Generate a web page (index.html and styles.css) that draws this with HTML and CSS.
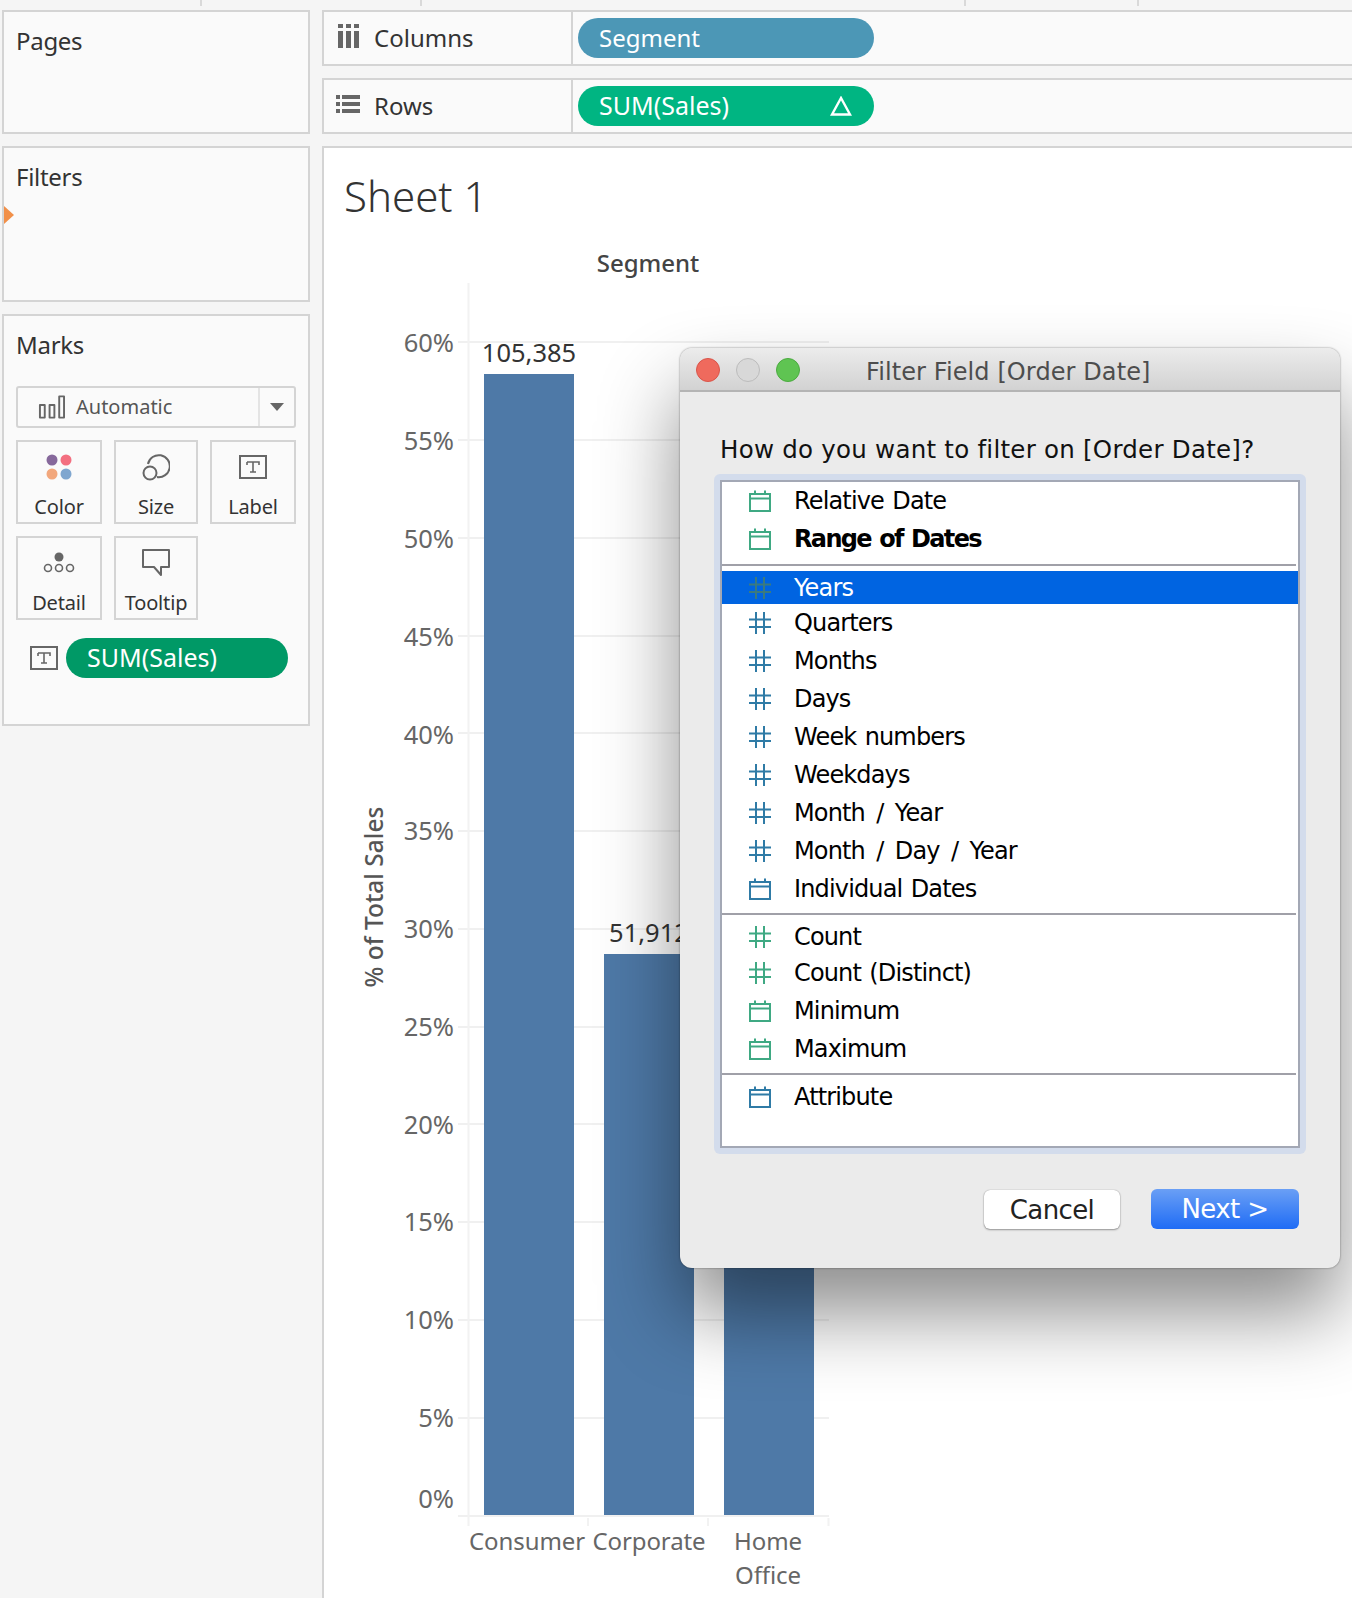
FILE: index.html
```html
<!DOCTYPE html>
<html lang="en">
<head>
<meta charset="utf-8">
<title>Filter Field [Order Date]</title>
<link rel="stylesheet" href="styles.css">
</head>
<body>
<svg class="defs" width="0" height="0" aria-hidden="true">
  <symbol id="cal" viewBox="0 0 22 22"><path d="M1 4h20v17H1zM1 8.500h20M6 0.500v4M16 0.500v4" fill="none" stroke="currentColor" stroke-width="2"/></symbol>
  <symbol id="hash" viewBox="0 0 22 22"><path d="M7 0v22M15 0v22M0 7.500h22M0 15h22" fill="none" stroke="currentColor" stroke-width="2"/></symbol>
  <symbol id="t" viewBox="0 0 28 24"><rect x="1" y="1" width="26" height="22" fill="none" stroke="currentColor" stroke-width="2"/><path d="M8 7h12v3M14 7v10M11 17h6M8 10V7" fill="none" stroke="currentColor" stroke-width="1.600"/></symbol>
</svg>
<div class="ticks"><i class="tick t1"></i><i class="tick t2"></i><i class="tick t3"></i><i class="tick t4"></i></div>
<main class="workspace">
  <aside class="side">
    <section class="panel pages"><h2 class="panel-title">Pages</h2></section>
    <section class="panel filters"><h2 class="panel-title">Filters</h2><span class="drop-arrow"></span></section>
    <section class="panel marks">
      <h2 class="panel-title">Marks</h2>
      <div class="select">
        <svg class="select-icon" viewBox="0 0 28 24"><path d="M2 10h5v13H2zM12 10h5v13h-5zM22 1h5v22h-5z" fill="none" stroke="#666" stroke-width="2" stroke-linejoin="round"/></svg>
        <span class="select-text">Automatic</span>
        <span class="select-btn"><span class="caret"></span></span>
      </div>
      <div class="cards">
        <div class="card">
          <svg class="card-icon" viewBox="0 0 28 28"><circle cx="7" cy="7" r="5.500" fill="#86689b"/><circle cx="21" cy="7" r="5.500" fill="#f36f80"/><circle cx="7" cy="21" r="5.500" fill="#f2a77c"/><circle cx="21" cy="21" r="5.500" fill="#7fa6cf"/></svg>
          <span>Color</span>
        </div>
        <div class="card">
          <svg class="card-icon" viewBox="0 0 28 28"><path d="M6 11A11 11 0 1 1 15 24" fill="none" stroke="#666" stroke-width="2"/><circle cx="8" cy="20" r="6.500" fill="none" stroke="#666" stroke-width="2"/></svg>
          <span>Size</span>
        </div>
        <div class="card">
          <svg class="card-icon" viewBox="0 0 28 24"><use href="#t" class="ic-gray"/></svg>
          <span>Label</span>
        </div>
        <div class="card">
          <svg class="card-icon wide" viewBox="0 0 32 28"><circle cx="16" cy="8" r="4.500" fill="#666"/><circle cx="5" cy="19" r="3.500" fill="none" stroke="#666" stroke-width="1.600"/><circle cx="16" cy="19" r="3.500" fill="none" stroke="#666" stroke-width="1.600"/><circle cx="27" cy="19" r="3.500" fill="none" stroke="#666" stroke-width="1.600"/></svg>
          <span>Detail</span>
        </div>
        <div class="card">
          <svg class="card-icon" viewBox="0 0 28 28"><path d="M1 1h26v17h-8v8l-7-8H1z" fill="none" stroke="#666" stroke-width="2" stroke-linejoin="round"/></svg>
          <span>Tooltip</span>
        </div>
      </div>
      <div class="mark-field">
        <svg class="mark-t" viewBox="0 0 28 24"><use href="#t" class="ic-gray"/></svg>
        <span class="pill pill-mark">SUM(Sales)</span>
      </div>
    </section>
  </aside>
  <div class="main">
    <section class="panel shelf">
      <div class="shelf-label">
        <svg class="shelf-icon" viewBox="0 0 24 24"><path d="M2 0h5v4H2zM10 0h5v4h-5zM18 0h5v4h-5zM2 7h5v17H2zM10 7h5v17h-5zM18 7h5v17h-5z" fill="#666"/></svg>
        <span>Columns</span>
      </div>
      <div class="shelf-drop"><span class="pill pill-dim">Segment</span></div>
    </section>
    <section class="panel shelf">
      <div class="shelf-label">
        <svg class="shelf-icon" viewBox="0 0 24 24"><path d="M0 3h4v4H0zM6 3h18v4H6zM0 10h4v4H0zM6 10h18v4H6zM0 17h4v4H0zM6 17h18v4H6z" fill="#666"/></svg>
        <span>Rows</span>
      </div>
      <div class="shelf-drop">
        <span class="pill pill-meas">SUM(Sales)
          <svg class="delta" viewBox="0 0 22 20"><path d="M11 2L2 18.500h18z" fill="none" stroke="#fff" stroke-width="2.400"/></svg>
        </span>
      </div>
    </section>
    <section class="panel view">
      <h1 class="sheet-title">Sheet 1</h1>
      <svg class="chart" viewBox="324 240 1028 1358">
        <g class="grid">
          <path d="M458 342h371M458 440h371M458 538h371M458 636h371M458 733h371M458 831h371M458 929h371M458 1027h371M458 1124h371M458 1222h371M458 1320h371M458 1418h371M458 1516h371"/>
        </g>
        <path class="axis" d="M468.500 283V1526M588 1518v8M708 1518v8M828.500 1518v8"/>
        <rect class="bar" x="484" y="374" width="90" height="1141"/>
        <rect class="bar" x="604" y="954" width="90" height="561"/>
        <rect class="bar" x="724" y="1200" width="90" height="315"/>
        <g class="ylabels">
          <text x="454" y="352">60%</text><text x="454" y="450">55%</text><text x="454" y="548">50%</text><text x="454" y="646">45%</text><text x="454" y="744">40%</text><text x="454" y="840">35%</text><text x="454" y="938">30%</text><text x="454" y="1036">25%</text><text x="454" y="1134">20%</text><text x="454" y="1231">15%</text><text x="454" y="1329">10%</text><text x="454" y="1427">5%</text><text x="454" y="1508">0%</text>
        </g>
        <g class="xlabels">
          <text x="527" y="1550">Consumer</text><text x="649" y="1550">Corporate</text><text x="768" y="1550">Home</text><text x="768" y="1584">Office</text>
        </g>
        <g class="values"><text x="529" y="362">105,385</text><text x="649" y="942">51,912</text></g>
        <text class="header" x="648" y="272">Segment</text>
        <text class="ytitle" transform="translate(383 897) rotate(-90)">% of Total Sales</text>
      </svg>
    </section>
  </div>
</main>
<div class="dialog">
  <header class="titlebar">
    <span class="light red"></span><span class="light gray"></span><span class="light green"></span>
    <span class="dialog-title">Filter Field [Order Date]</span>
  </header>
  <div class="dialog-body">
    <p class="question">How do you want to filter on [Order Date]?</p>
    <div class="listring">
      <div class="list">
        <div class="group">
          <div class="row"><svg class="ic ic-green"><use href="#cal"/></svg>Relative Date</div>
          <div class="row strong"><svg class="ic ic-green"><use href="#cal"/></svg>Range of Dates</div>
        </div>
        <div class="group">
          <div class="row selected"><svg class="ic ic-dim"><use href="#hash"/></svg>Years</div>
          <div class="row"><svg class="ic ic-blue"><use href="#hash"/></svg>Quarters</div>
          <div class="row"><svg class="ic ic-blue"><use href="#hash"/></svg>Months</div>
          <div class="row"><svg class="ic ic-blue"><use href="#hash"/></svg>Days</div>
          <div class="row"><svg class="ic ic-blue"><use href="#hash"/></svg>Week numbers</div>
          <div class="row"><svg class="ic ic-blue"><use href="#hash"/></svg>Weekdays</div>
          <div class="row"><svg class="ic ic-blue"><use href="#hash"/></svg><span>Month <span class="slash">/</span> Year</span></div>
          <div class="row"><svg class="ic ic-blue"><use href="#hash"/></svg><span>Month <span class="slash">/</span> Day <span class="slash">/</span> Year</span></div>
          <div class="row"><svg class="ic ic-blue"><use href="#cal"/></svg>Individual Dates</div>
        </div>
        <div class="group">
          <div class="row tight"><svg class="ic ic-green"><use href="#hash"/></svg>Count</div>
          <div class="row tight"><svg class="ic ic-green"><use href="#hash"/></svg>Count (Distinct)</div>
          <div class="row"><svg class="ic ic-green"><use href="#cal"/></svg>Minimum</div>
          <div class="row"><svg class="ic ic-green"><use href="#cal"/></svg>Maximum</div>
        </div>
        <div class="group last">
          <div class="row"><svg class="ic ic-blue"><use href="#cal"/></svg>Attribute</div>
        </div>
      </div>
    </div>
    <div class="actions">
      <button class="btn btn-cancel" type="button">Cancel</button>
      <button class="btn btn-next" type="button">Next &gt;</button>
    </div>
  </div>
</div>
</body>
</html>
```
FILE: styles.css
```css
* { box-sizing: border-box; }
html, body { margin: 0; height: 1598px; overflow: hidden; }
body { background: #f5f5f5; font-family: "Noto Sans", "Liberation Sans", sans-serif; color: #333; position: relative; }
.defs { position: absolute; }

.ticks { height: 0; }
.tick { position: absolute; top: 0; width: 2px; height: 6px; background: #d9d9d9; }
.t1 { left: 200px; } .t2 { left: 420px; } .t3 { left: 964px; } .t4 { left: 1137px; }

.workspace { display: grid; grid-template-columns: 308px 1fr; column-gap: 12px; padding: 10px 0 0 2px; height: 1598px; }
.side, .main { display: flex; flex-direction: column; gap: 12px; min-width: 0; }
.panel { background: #fafafa; border: 2px solid #d4d4d4; position: relative; }
.panel-title { margin: 0; padding: 13px 0 0 12px; font-size: 24px; line-height: 32px; font-weight: 400; color: #333; letter-spacing: -0.300px; }
.pages { height: 124px; }
.filters { height: 156px; }
.marks { height: 412px; }
.drop-arrow { position: absolute; left: 0; top: 58px; width: 0; height: 0; border-left: 10px solid #f19049; border-top: 9px solid transparent; border-bottom: 9px solid transparent; }

.select { display: flex; align-items: center; height: 42px; margin: 25px 12px 0 12px; border: 2px solid #d4d4d4; border-radius: 3px; padding-left: 20px; }
.select-icon { width: 27px; height: 24px; flex: none; }
.select-text { flex: 1; margin-left: 11px; font-size: 20px; color: #555; position: relative; top: -1px; }
.select-btn { width: 36px; height: 38px; border-left: 2px solid #e4e4e4; display: flex; align-items: center; justify-content: center; }
.caret { width: 0; height: 0; border-top: 8px solid #666; border-left: 7px solid transparent; border-right: 7px solid transparent; }

.cards { display: grid; grid-template-columns: 86px 84px 86px; grid-auto-rows: 84px; gap: 12px; margin: 12px 12px 0 12px; }
.card { border: 2px solid #d4d4d4; display: flex; flex-direction: column; align-items: center; padding-top: 11px; font-size: 20px; line-height: 28px; letter-spacing: -0.150px; color: #333; }
.card-icon { width: 28px; height: 28px; flex: none; margin-bottom: 12px; }
.card-icon.wide { width: 32px; }
.ic-gray { color: #666; }

.mark-field { display: flex; align-items: center; margin: 18px 0 0 26px; gap: 8px; }
.mark-t { width: 28px; height: 24px; color: #666; flex: none; }
.pill { display: flex; align-items: center; height: 40px; border-radius: 20px; padding: 0 0 3px 21px; font-size: 25px; color: #fff; }
.pill-mark { width: 222px; background: #009966; }
.pill-dim { width: 296px; background: #4c97b6; font-size: 24px; padding-bottom: 2px; }
.pill-meas { width: 296px; background: #00b582; justify-content: space-between; padding-right: 22px; }
.delta { width: 22px; height: 20px; position: relative; top: 1px; }

.main { overflow: visible; }
.shelf { height: 56px; border-right: 0; display: flex; }
.shelf-label { width: 249px; border-right: 2px solid #d4d4d4; display: flex; align-items: center; padding: 0 0 2px 12px; font-size: 24px; color: #333; }
.shelf-icon { width: 24px; height: 24px; margin-right: 14px; flex: none; position: relative; top: -1px; }
.shelf-drop { flex: 1; padding: 6px 0 0 5px; }

.view { flex: 1; background: #fff; border-right: 0; border-bottom: 0; min-height: 0; }
.sheet-title { margin: 0; height: 92px; padding: 24px 0 0 20px; font-size: 42px; line-height: 48px; font-weight: 300; color: #333; }
.chart { display: block; width: 1028px; height: 1358px; }
.grid path { stroke: #f0f0f0; stroke-width: 2; fill: none; }
.axis { stroke: #f2f2f2; stroke-width: 2; fill: none; }
.bar { fill: #4e79a7; }
.ylabels text { font-size: 25.500px; fill: #666; text-anchor: end; }
.xlabels text { font-size: 24px; letter-spacing: -0.100px; fill: #666; text-anchor: middle; }
.values text { font-size: 25.500px; fill: #333; text-anchor: middle; }
.header { font-size: 24px; font-weight: 500; fill: #444; text-anchor: middle; }
.ytitle { font-size: 24.500px; font-weight: 500; fill: #555; text-anchor: middle; }

.dialog { position: absolute; left: 680px; top: 348px; width: 660px; height: 920px; background: #ebebeb; border-radius: 12px; box-shadow: 0 0 2px rgba(0,0,0,.5), 0 45px 80px rgba(0,0,0,.45); font-family: "DejaVu Sans", "Liberation Sans", sans-serif; color: #000; display: flex; flex-direction: column; }
.titlebar { height: 44px; flex: none; border-bottom: 2px solid #b4b4b4; border-radius: 12px 12px 0 0; background: linear-gradient(#ececec, #d2d2d2); display: flex; align-items: center; padding: 1px 0 0 16px; position: relative; }
.light { width: 24px; height: 24px; border-radius: 50%; margin-right: 16px; flex: none; }
.red { background: #ef6a5d; border: 1px solid #d9554a; }
.gray { background: #d8d8d8; border: 1px solid #bcbcbc; }
.green { background: #5fc452; border: 1px solid #4bab40; }
.dialog-title { position: absolute; left: 186px; top: 10px; font-size: 24px; color: #4d4d4d; white-space: nowrap; letter-spacing: 0.100px; }

.dialog-body { flex: 1; padding: 40px 40px 0 34px; display: flex; flex-direction: column; }
.question { margin: 0 0 6px 6px; font-size: 24.500px; line-height: 36px; letter-spacing: 0.250px; white-space: nowrap; height: 36px; color: #111; }
.listring { height: 680px; padding: 6px; background: #d3dcec; border-radius: 6px; width: 592px; flex: none; }
.list { height: 100%; background: #fff; border: 2px solid #a3a8b5; }
.group { border-top: 2px solid #a0a0a8; padding-top: 5px; margin-right: 2px; }
.group:first-child { border-top: 0; padding-top: 0; padding-bottom: 6px; }
.group + .group { padding-bottom: 5px; }
.group.last { padding-top: 3px; }
.row { display: flex; align-items: center; height: 38px; font-size: 24px; letter-spacing: -0.850px; word-spacing: 1.500px; padding-left: 27px; white-space: nowrap; }
.row.tight { height: 36px; padding-bottom: 2px; }
.row.strong { font-weight: 700; letter-spacing: -1.650px; }
.row.selected { height: 33px; background: #0064e1; color: #fff; margin-right: -2px; }
.slash { margin: 0 3px; }
.ic { width: 22px; height: 22px; margin-right: 23px; flex: none; }
.ic-green { color: #3fa983; }
.ic-blue { color: #2f7ba6; }
.ic-dim { color: #3a7a80; }

.actions { display: flex; justify-content: flex-end; gap: 31px; margin-top: 35px; padding-right: 1px; }
.btn { height: 40px; border-radius: 6px; border: 0; font-family: inherit; font-size: 26px; letter-spacing: -0.600px; padding: 0; }
.btn-cancel { width: 136px; height: 39px; background: #fff; color: #222; box-shadow: 0 0 1px rgba(0,0,0,.4), 0 1px 2px rgba(0,0,0,.35); margin-top: 1px; }
.btn-next { width: 148px; color: #fff; background: linear-gradient(#6a9ff5, #1f6cf5); }
```
